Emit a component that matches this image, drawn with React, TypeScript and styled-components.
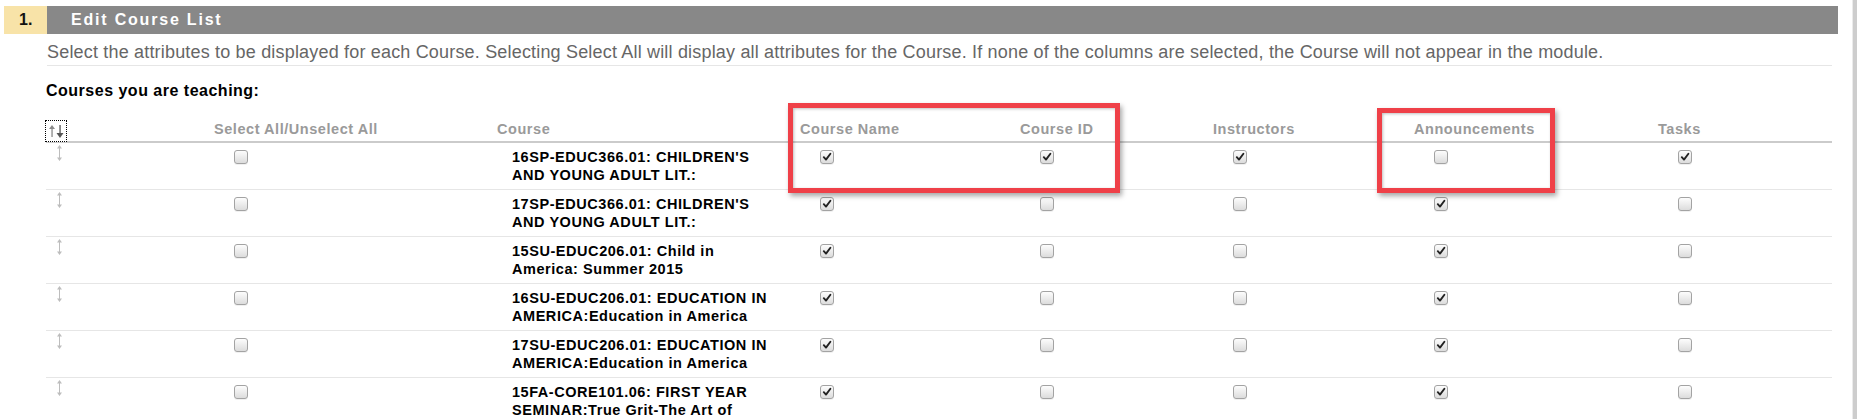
import React from "react";
import styled, { createGlobalStyle } from "styled-components";

const GlobalStyle = createGlobalStyle`
  html, body { margin: 0; padding: 0; background: #ffffff; }
  body { font-family: "Liberation Sans", Arial, sans-serif; overflow: hidden; }
`;

const COLS = "168px 283px 303px 220px 193px 201px 244px 174px";

const Page = styled.div`
  display: flex;
  height: 419px;
  overflow: hidden;
`;

const Main = styled.main`
  position: relative;
  flex: 1;
  padding: 6px 14px 0 4px;
`;

const ScrollTrack = styled.div`
  width: 4px;
  background: #cdcdcd;
  border-left: 1px solid #ebebeb;
`;

const StepHeader = styled.div`
  display: flex;
  height: 28px;
  font-weight: bold;
  font-size: 16px;
  line-height: 28px;
`;

const StepNumber = styled.div`
  width: 43px;
  box-sizing: border-box;
  padding-left: 15px;
  background: #f8e3a8;
  color: #111;
`;

const StepTitle = styled.div`
  flex: 1;
  background: #888888;
  color: #ffffff;
  padding-left: 24px;
  letter-spacing: 1.8px;
`;

const Content = styled.div`
  margin: 0 6px 0 42px;
`;

const Description = styled.p`
  margin: 8px 0 0 1px;
  padding-bottom: 3px;
  border-bottom: 1px solid #e6e6e6;
  color: #666666;
  font-size: 18px;
  letter-spacing: 0.18px;
  line-height: 20px;
  white-space: nowrap;
`;

const SubHeading = styled.h3`
  margin: 15px 0 0;
  font-size: 16px;
  letter-spacing: 0.5px;
  line-height: 20px;
  color: #000;
`;

const HeaderRow = styled.div`
  display: grid;
  grid-template-columns: ${COLS};
  height: 40px;
  align-items: end;
  border-bottom: 2px solid #cbcbcb;
`;

const HeaderCell = styled.div`
  font-size: 14.5px;
  font-weight: bold;
  letter-spacing: 0.55px;
  color: #9a9a9a;
  line-height: 20px;
  padding-bottom: 2px;
  white-space: nowrap;
`;

const SortBox = styled.div`
  width: 22px;
  height: 22px;
  box-sizing: border-box;
  border: 1px dotted #000;
  margin: 0 0 -1px -1px;
  display: flex;
  align-items: center;
  justify-content: center;
  background: #fff;
`;

const DataRow = styled.div`
  display: grid;
  grid-template-columns: ${COLS};
  height: 46px;
  align-items: start;
  border-bottom: 1px solid #e6e6e6;
`;

const HandleCell = styled.div`
  padding: 1px 0 0 10px;
`;

const CheckCell = styled.div`
  padding: 7px 0 0 20px;
`;

const CourseCell = styled.div`
  padding: 5px 0 0 15px;
  font-size: 14.5px;
  font-weight: bold;
  letter-spacing: 0.55px;
  line-height: 18px;
  color: #000;
  white-space: nowrap;
`;

const CourseLine = styled.span`
  display: block;
`;

const Box = styled.span`
  display: flex;
  align-items: center;
  justify-content: center;
  width: 14px;
  height: 14px;
  box-sizing: border-box;
  border: 1px solid #a3a3a3;
  border-radius: 3px;
  background: linear-gradient(#fdfdfd, #dcdcdc);
  box-shadow: 0 1px 0 rgba(0, 0, 0, 0.06);
`;

const Highlight = styled.div<{ $l: number; $t: number; $w: number; $h: number }>`
  position: absolute;
  left: ${(p) => p.$l}px;
  top: ${(p) => p.$t}px;
  width: ${(p) => p.$w}px;
  height: ${(p) => p.$h}px;
  box-sizing: border-box;
  border: 5px solid #ef4048;
  box-shadow: 2px 3px 5px rgba(0, 0, 0, 0.35), inset 1px 1px 3px rgba(0, 0, 0, 0.25);
  pointer-events: none;
`;

const Checkbox = ({ checked }: { checked: boolean }) => (
  <Box>
    {checked && (
      <svg width="10" height="10" viewBox="0 0 10 10">
        <path d="M1.8 5.2 L4 7.6 L8.4 1.8" fill="none" stroke="#222" strokeWidth="1.9" strokeLinecap="round" strokeLinejoin="round" />
      </svg>
    )}
  </Box>
);

const Handle = () => (
  <svg width="7" height="18" viewBox="0 0 7 18">
    <path d="M3.5 1 L1 4.5 H6 Z M3.5 17 L1 13.5 H6 Z" fill="#bdbdbd" />
    <rect x="3" y="3" width="1" height="12" fill="#bdbdbd" />
  </svg>
);

const SortIcon = () => (
  <SortBox>
    <svg width="18" height="16" viewBox="0 0 18 16">
      <path d="M5 2 L2 6 H8 Z" fill="#8a8a8a" />
      <rect x="4.4" y="4" width="1.3" height="10" fill="#8a8a8a" />
      <rect x="12.4" y="2" width="1.3" height="9" fill="#555" />
      <path d="M13 15 L9.5 10 H16.5 Z" fill="#555" />
    </svg>
  </SortBox>
);

const headers = ["Select All/Unselect All", "Course", "Course Name", "Course ID", "Instructors", "Announcements", "Tasks"];

const courses: { lines: string[]; flags: boolean[] }[] = [
  { lines: ["16SP-EDUC366.01: CHILDREN'S", "AND YOUNG ADULT LIT.:"], flags: [true, true, true, false, true] },
  { lines: ["17SP-EDUC366.01: CHILDREN'S", "AND YOUNG ADULT LIT.:"], flags: [true, false, false, true, false] },
  { lines: ["15SU-EDUC206.01: Child in", "America: Summer 2015"], flags: [true, false, false, true, false] },
  { lines: ["16SU-EDUC206.01: EDUCATION IN", "AMERICA:Education in America"], flags: [true, false, false, true, false] },
  { lines: ["17SU-EDUC206.01: EDUCATION IN", "AMERICA:Education in America"], flags: [true, false, false, true, false] },
  { lines: ["15FA-CORE101.06: FIRST YEAR", "SEMINAR:True Grit-The Art of"], flags: [true, false, false, true, false] },
];

export default function App() {
  return (
    <>
      <GlobalStyle />
      <Page>
        <Main>
          <StepHeader>
            <StepNumber>1.</StepNumber>
            <StepTitle>Edit Course List</StepTitle>
          </StepHeader>
          <Content>
            <Description>
              Select the attributes to be displayed for each Course. Selecting Select All will display all attributes for the Course. If none of the columns are selected, the Course will not appear in the module.
            </Description>
            <SubHeading>Courses you are teaching:</SubHeading>
            <HeaderRow>
              <SortIcon />
              {headers.map((h) => (
                <HeaderCell key={h}>{h}</HeaderCell>
              ))}
            </HeaderRow>
            {courses.map((c, i) => (
              <DataRow key={i}>
                <HandleCell>
                  <Handle />
                </HandleCell>
                <CheckCell>
                  <Checkbox checked={false} />
                </CheckCell>
                <CourseCell>
                  {c.lines.map((l) => (
                    <CourseLine key={l}>{l}</CourseLine>
                  ))}
                </CourseCell>
                {c.flags.map((f, j) => (
                  <CheckCell key={j}>
                    <Checkbox checked={f} />
                  </CheckCell>
                ))}
              </DataRow>
            ))}
          </Content>
          <Highlight $l={788} $t={103} $w={332} $h={90} />
          <Highlight $l={1377} $t={108} $w={178} $h={85} />
        </Main>
        <ScrollTrack />
      </Page>
    </>
  );
}
